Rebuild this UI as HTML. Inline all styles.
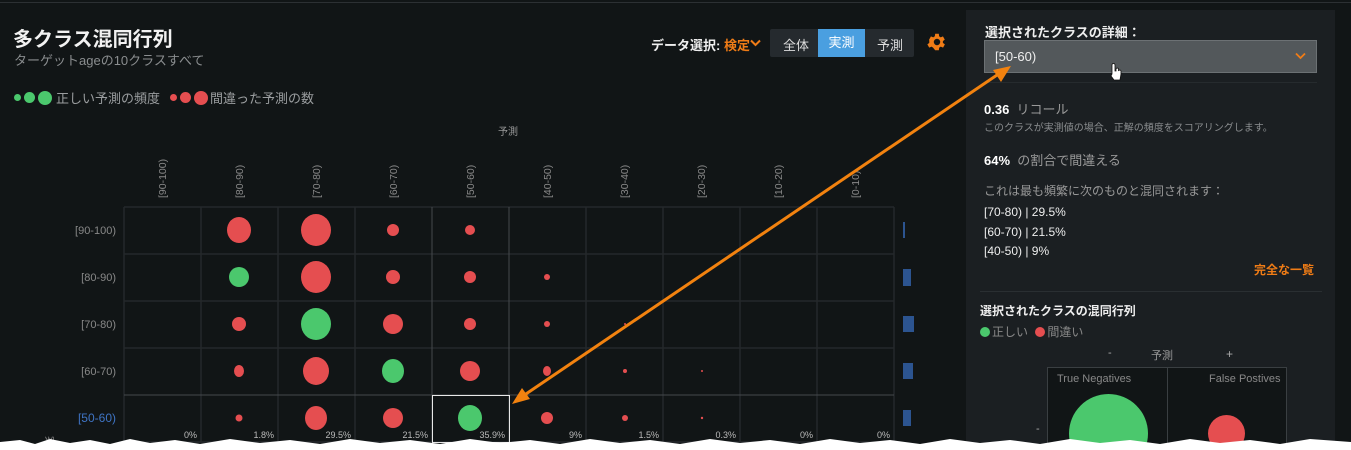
<!DOCTYPE html>
<html><head><meta charset="utf-8"><style>
*{margin:0;padding:0;box-sizing:border-box}
html,body{width:1351px;height:450px;overflow:hidden}
body{background:#111516;font-family:"Liberation Sans","Noto Sans CJK JP",sans-serif;position:relative;color:#ddd}
.a{position:absolute;white-space:nowrap}
</style></head><body>
<div class="a" style="left:0;top:2px;width:1351px;height:1px;background:#2c3033"></div>
<div class="a" style="left:13px;top:23px;font-size:20px;font-weight:bold;color:#f2f2f2">多クラス混同行列</div>
<div class="a" style="left:14px;top:50px;font-size:13px;color:#8a8d8f">ターゲットageの10クラスすべて</div>
<div class="a" style="left:14px;top:88px;font-size:13px;color:#9a9d9f;display:flex;align-items:center">
<span style="width:7px;height:7px;border-radius:50%;background:#4bc86d;margin-right:3px"></span><span style="width:11px;height:11px;border-radius:50%;background:#4bc86d;margin-right:3px"></span><span style="width:14px;height:14px;border-radius:50%;background:#4bc86d;margin-right:4px"></span>正しい予測の頻度
<span style="width:7px;height:7px;border-radius:50%;background:#e54e50;margin:0 3px 0 10px"></span><span style="width:11px;height:11px;border-radius:50%;background:#e54e50;margin-right:3px"></span><span style="width:14px;height:14px;border-radius:50%;background:#e54e50;margin-right:2px"></span>間違った予測の数</div>
<div class="a" style="left:651px;top:35px;font-size:13px;font-weight:bold;color:#eee">データ選択: <span style="color:#f07c16">検定</span></div>
<svg class="a" style="left:750px;top:39px" width="11" height="8" viewBox="0 0 11 8"><path d="M1 1.5l4.5 4.5 4.5-4.5" fill="none" stroke="#f07c16" stroke-width="2"/></svg>
<div class="a" style="left:770px;top:29px;width:144px;height:28px;background:#252a2e;border-radius:2px;font-size:13px;color:#ddd">
<span class="a" style="left:13px;top:6px">全体</span>
<span class="a" style="left:48px;top:0;width:47px;height:28px;background:#4a9fe0;color:#fff;text-align:center;line-height:28px">実測</span>
<span class="a" style="left:107px;top:6px">予測</span></div>
<svg class="a" style="left:926px;top:31px" width="22" height="22" viewBox="0 0 24 24"><path fill="#f07c16" d="M19.4 13a7.5 7.5 0 000-2l2.1-1.6-2-3.5-2.5 1a7 7 0 00-1.7-1L15 3h-4l-.4 2.9a7 7 0 00-1.7 1l-2.5-1-2 3.5L4.6 11a7.5 7.5 0 000 2l-2.1 1.6 2 3.5 2.5-1a7 7 0 001.7 1L11 21h4l.4-2.9a7 7 0 001.7-1l2.5 1 2-3.5zM13 15.5a3.5 3.5 0 110-7 3.5 3.5 0 010 7z" transform="translate(-1 0)"/></svg>

<div class="a" style="left:966px;top:10px;width:369px;height:440px;background:#1b1f22"></div>
<div class="a" style="left:985px;top:22px;font-size:13px;font-weight:bold;color:#eee">選択されたクラスの詳細：</div>
<div class="a" style="left:984px;top:40px;width:333px;height:33px;background:#53585b;border:1px solid #6c7174;font-size:13px;color:#eee;padding:8px 0 0 10px">[50-60)</div>
<svg class="a" style="left:1295px;top:52px" width="11" height="8" viewBox="0 0 11 8"><path d="M1 1.5l4.5 4.5 4.5-4.5" fill="none" stroke="#f07c16" stroke-width="1.8"/></svg>
<div class="a" style="left:984px;top:82px;width:333px;height:1px;background:#262b2e"></div>
<div class="a" style="left:984px;top:99px;font-size:13px;color:#999"><b style="color:#fff">0.36</b>&nbsp; リコール</div>
<div class="a" style="left:984px;top:119px;font-size:10px;color:#8a8d8f">このクラスが実測値の場合、正解の頻度をスコアリングします。</div>
<div class="a" style="left:984px;top:150px;font-size:13px;color:#999"><b style="color:#fff">64%</b>&nbsp; の割合で間違える</div>
<div class="a" style="left:984px;top:182px;font-size:12px;color:#999">これは最も頻繁に次のものと混同されます：</div>
<div class="a" style="left:984px;top:203px;font-size:12px;color:#eee;line-height:19.5px">[70-80) | 29.5%<br>[60-70) | 21.5%<br>[40-50) | 9%</div>
<div class="a" style="left:1254px;top:261px;font-size:12px;font-weight:bold;color:#f07c16">完全な一覧</div>
<div class="a" style="left:980px;top:291px;width:342px;height:1px;background:#2a2f32"></div>
<div class="a" style="left:980px;top:302px;font-size:12px;font-weight:bold;color:#eee">選択されたクラスの混同行列</div>
<div class="a" style="left:980px;top:323px;font-size:12px;color:#888;display:flex;align-items:center"><span style="width:10px;height:10px;border-radius:50%;background:#4bc86d;margin-right:2px"></span>正しい&nbsp;<span style="width:10px;height:10px;border-radius:50%;background:#e54e50;margin:0 2px 0 4px"></span>間違い</div>
<div class="a" style="left:1108px;top:347px;font-size:11px;color:#aaa">-</div>
<div class="a" style="left:1151px;top:347px;font-size:11px;color:#999">予測</div>
<div class="a" style="left:1226px;top:347px;font-size:12px;color:#aaa">+</div>
<div class="a" style="left:1047px;top:367px;width:240px;height:83px;background:#111516;border:1px solid #3a3f42;overflow:hidden">
<div class="a" style="left:119px;top:0;width:1px;height:83px;background:#3a3f42"></div>
<div class="a" style="left:9px;top:5px;font-size:11px;color:#888">True Negatives</div>
<div class="a" style="left:161px;top:5px;font-size:11px;color:#888">False Postives</div>
<div class="a" style="left:21px;top:26px;width:79px;height:79px;border-radius:50%;background:#4bc86d"></div>
<div class="a" style="left:160px;top:47px;width:37px;height:37px;border-radius:50%;background:#e54e50"></div>
</div>
<div class="a" style="left:1036px;top:423px;font-size:11px;color:#aaa">-</div>

<svg class="a" style="left:0;top:0" width="960" height="450">
<text x="508" y="135" font-size="10" fill="#999" text-anchor="middle" font-family="Liberation Sans,Noto Sans CJK JP">予測</text>
<g font-size="10.5" fill="#888" font-family="Liberation Sans">
<text transform="translate(166,198) rotate(-90)">[90-100)</text>
<text transform="translate(243,198) rotate(-90)">[80-90)</text>
<text transform="translate(320,198) rotate(-90)">[70-80)</text>
<text transform="translate(397,198) rotate(-90)">[60-70)</text>
<text transform="translate(474,198) rotate(-90)">[50-60)</text>
<text transform="translate(551,198) rotate(-90)">[40-50)</text>
<text transform="translate(628,198) rotate(-90)">[30-40)</text>
<text transform="translate(705,198) rotate(-90)">[20-30)</text>
<text transform="translate(782,198) rotate(-90)">[10-20)</text>
<text transform="translate(859,198) rotate(-90)">[0-10)</text>
</g>
<g font-size="11" fill="#888" text-anchor="end" font-family="Liberation Sans">
<text x="116" y="234">[90-100)</text><text x="116" y="281">[80-90)</text><text x="116" y="328">[70-80)</text><text x="116" y="375">[60-70)</text>
<text x="116" y="422" fill="#3f74c4" font-size="12">[50-60)</text></g>
<g stroke="#24282b" stroke-width="1.5">
<line x1="124" y1="207" x2="894" y2="207"/><line x1="124" y1="254" x2="894" y2="254"/><line x1="124" y1="301" x2="894" y2="301"/><line x1="124" y1="348" x2="894" y2="348"/><line x1="124" y1="442" x2="894" y2="442"/>
<line x1="124" y1="207" x2="124" y2="442"/><line x1="201" y1="207" x2="201" y2="442"/><line x1="278" y1="207" x2="278" y2="442"/><line x1="355" y1="207" x2="355" y2="442"/><line x1="586" y1="207" x2="586" y2="442"/><line x1="663" y1="207" x2="663" y2="442"/><line x1="740" y1="207" x2="740" y2="442"/><line x1="817" y1="207" x2="817" y2="442"/><line x1="894" y1="207" x2="894" y2="442"/>
</g>
<g stroke="#45494c" stroke-width="1"><line x1="432" y1="207" x2="432" y2="442"/><line x1="509" y1="207" x2="509" y2="442"/><line x1="124" y1="395" x2="894" y2="395"/></g>
<rect x="432.5" y="395.5" width="77" height="47" fill="none" stroke="#e8e8e8" stroke-width="1"/>
<g fill="#e54e50">
<ellipse cx="239" cy="230" rx="12" ry="13"/><ellipse cx="316" cy="230" rx="15" ry="16"/><ellipse cx="393" cy="230" rx="6" ry="6"/><ellipse cx="470" cy="230" rx="5" ry="5"/>
<ellipse cx="316" cy="277" rx="15" ry="16"/><ellipse cx="393" cy="277" rx="7" ry="7"/><ellipse cx="470" cy="277" rx="6" ry="6"/><circle cx="547" cy="277" r="3"/>
<ellipse cx="239" cy="324" rx="7" ry="7"/><ellipse cx="393" cy="324" rx="10" ry="10"/><ellipse cx="470" cy="324" rx="6" ry="6"/><circle cx="547" cy="324" r="3"/><circle cx="625" cy="324" r="1"/>
<ellipse cx="239" cy="371" rx="5" ry="6"/><ellipse cx="316" cy="371" rx="13" ry="14"/><ellipse cx="470" cy="371" rx="10" ry="10"/><ellipse cx="547" cy="371" rx="4" ry="5"/><circle cx="625" cy="371" r="2"/><circle cx="702" cy="371" r="1"/>
<circle cx="239" cy="418" r="3.5"/><ellipse cx="316" cy="418" rx="11" ry="12"/><ellipse cx="393" cy="418" rx="10" ry="10"/><ellipse cx="547" cy="418" rx="6" ry="6"/><circle cx="625" cy="418" r="3"/><circle cx="702" cy="418" r="1.2"/>
</g>
<g fill="#4bc86d"><ellipse cx="239" cy="277" rx="10" ry="10"/><ellipse cx="316" cy="324" rx="15" ry="16"/><ellipse cx="393" cy="371" rx="11" ry="12"/><ellipse cx="470" cy="418" rx="12" ry="13"/></g>
<g font-size="9" fill="#bbb" text-anchor="end" font-family="Liberation Sans">
<text x="197" y="438">0%</text><text x="274" y="438">1.8%</text><text x="351" y="438">29.5%</text><text x="428" y="438">21.5%</text><text x="505" y="438">35.9%</text><text x="582" y="438">9%</text><text x="659" y="438">1.5%</text><text x="736" y="438">0.3%</text><text x="813" y="438">0%</text><text x="890" y="438">0%</text></g>
<g fill="#2c5490"><rect x="903" y="222" width="2" height="16"/><rect x="903" y="269" width="8" height="17"/><rect x="903" y="316" width="11" height="16"/><rect x="903" y="363" width="10" height="16"/><rect x="903" y="410" width="8" height="16"/></g>
<text transform="translate(46,436) rotate(90)" font-size="10" fill="#888" font-family="Noto Sans CJK JP">実</text>
</svg>
<svg class="a" style="left:0;top:0" width="1351" height="450">
<line x1="520" y1="398" x2="1000" y2="73" stroke="#f2820f" stroke-width="3"/>
<polygon points="512,404 522,388 530,399" fill="#f2820f"/>
<polygon points="1011,66 1001,82 993,70" fill="#f2820f"/>
<path d="M1112 74v-9a1.5 1.5 0 013 0v6h1v-2a1.3 1.3 0 012.5 0v2a1.3 1.3 0 012.5 0v3l-1 6h-6l-3-4z" fill="#fff" stroke="#111" stroke-width="0.8"/>
<path d="M0 442 L20 440 L35 444 L50 439 L70 443 L90 440 L110 444 L130 439 L150 443 L175 440 L200 444 L230 439 L260 443 L290 440 L320 444 L350 439 L380 443 L410 440 L440 444 L470 439 L500 443 L530 440 L560 444 L590 439 L620 443 L650 440 L680 444 L710 439 L740 443 L770 440 L800 444 L830 439 L860 443 L890 440 L920 444 L950 439 L980 443 L1010 440 L1040 444 L1070 439 L1100 443 L1130 440 L1160 444 L1190 439 L1220 443 L1250 440 L1280 444 L1310 439 L1351 442 L1351 450 L0 450Z" fill="#fff"/>
</svg>
</body></html>
